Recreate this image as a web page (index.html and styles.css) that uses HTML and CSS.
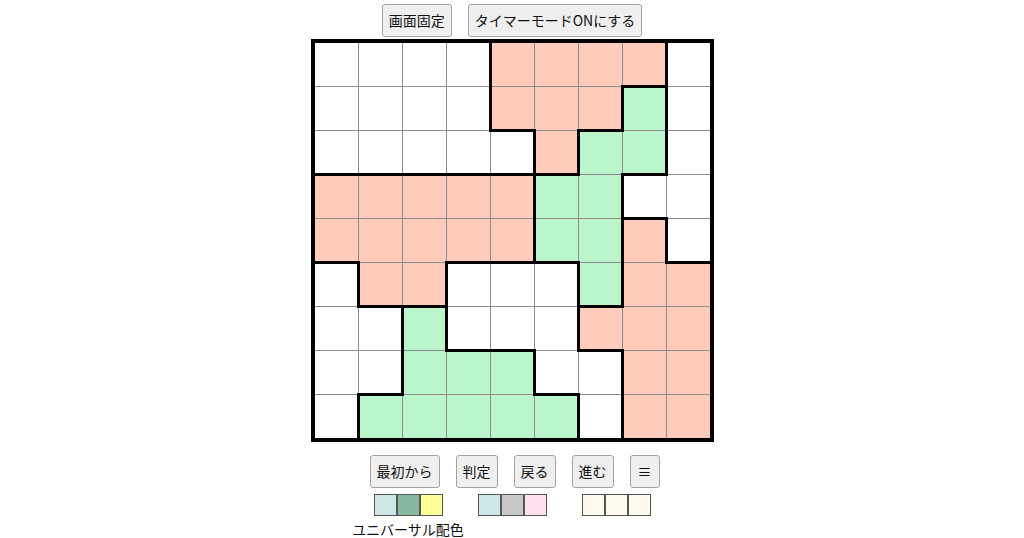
FILE: index.html
```html
<!DOCTYPE html>
<html lang="ja">
<head>
    <meta charset="UTF-8">
    <meta name="viewport" content="width=device-width, initial-scale=1.0">
    <title>パズル</title>
    <link rel="stylesheet" href="styles.css">
</head>
<body>
    <div class="toolbar">
        <button class="btn">画面固定</button>
        <button class="btn">タイマーモードONにする</button>
    </div>

    <div id="board" class="board">
        <!-- cells are built by board.js -->
    </div>

    <div class="controls">
        <button class="btn">最初から</button>
        <button class="btn">判定</button>
        <button class="btn">戻る</button>
        <button class="btn">進む</button>
        <button class="btn menu-btn">≡</button>
    </div>

    <div class="palettes">
        <div class="palette">
            <div class="swatches">
                <span class="swatch" style="background:#cde6e8"></span>
                <span class="swatch" style="background:#88b8a0"></span>
                <span class="swatch" style="background:#ffff99"></span>
            </div>
            <div class="palette-label">ユニバーサル配色</div>
        </div>
        <div class="palette">
            <div class="swatches">
                <span class="swatch" style="background:#cde6e8"></span>
                <span class="swatch" style="background:#c8c8c8"></span>
                <span class="swatch" style="background:#ffe0ef"></span>
            </div>
        </div>
        <div class="palette">
            <div class="swatches">
                <span class="swatch" style="background:#fffaee"></span>
                <span class="swatch" style="background:#fffaee"></span>
                <span class="swatch" style="background:#fffaee"></span>
            </div>
        </div>
    </div>

    <script src="board.js"></script>
</body>
</html>
```

FILE: styles.css
```css
body {
    font-family: 'Noto Sans CJK JP', 'Noto Sans', sans-serif;
    font-size: 14px;
    color: #111;
    margin: 0;
    padding-top: 4px;
    background-color: #fff;
    display: flex;
    flex-direction: column;
    align-items: center;
}

.btn {
    font-family: inherit;
    font-size: 14px;
    line-height: 19px;
    color: #111;
    padding: 6px 6px;
    margin: 0 8px;
    background-color: #efefef;
    border: 1px solid #a3a3a3;
    border-radius: 3px;
    cursor: pointer;
}

.btn:hover {
    background-color: #e5e5e5;
}

.menu-btn {
    padding: 6px 7px;
}

.toolbar {
    display: flex;
    margin-bottom: 2px;
}

.board {
    display: grid;
    grid-template-columns: repeat(9, 43px);
    grid-auto-rows: 43px;
    gap: 1px;
    background-color: #8c8c8c;
    border: 4px solid #000;
}

.cell {
    position: relative;
    background-color: #fff;
}

.cell.red {
    background-color: #ffccbb;
}

.cell.green {
    background-color: #bbf5cc;
}

/* thick region borders */
.cell.edge-r::after {
    content: '';
    position: absolute;
    top: -2px;
    bottom: -2px;
    right: -2px;
    width: 3px;
    background-color: #000;
    z-index: 1;
}

.cell.edge-b::before {
    content: '';
    position: absolute;
    left: -2px;
    right: -2px;
    bottom: -2px;
    height: 3px;
    background-color: #000;
    z-index: 1;
}

.controls {
    display: flex;
    margin-top: 13px;
    margin-left: 5px;
}

.palettes {
    display: flex;
    gap: 35px;
    margin-top: 6px;
}

.palette {
    display: flex;
    flex-direction: column;
    align-items: center;
}

.swatches {
    display: flex;
}

.swatch {
    display: block;
    width: 21px;
    height: 20px;
    border: 1px solid #555;
}

.palette-label {
    white-space: nowrap;
    line-height: 18px;
    margin: 4px -22px 0;
}
```

FILE: board.js
```js
// W = blank, R = red region, G = green region
const layout = [
    'WWWWRRRRW',
    'WWWWRRRGW',
    'WWWWWRGGW',
    'RRRRRGGWW',
    'RRRRRGGRW',
    'WRRWWWGRR',
    'WWGWWWRRR',
    'WWGGGWWRR',
    'WGGGGGWRR'
];

const names = { W: '', R: 'red', G: 'green' };
const board = document.getElementById('board');

layout.forEach((row, r) => {
    for (let c = 0; c < row.length; c++) {
        const cell = document.createElement('div');
        cell.classList.add('cell');
        const ch = row[c];
        if (names[ch]) cell.classList.add(names[ch]);

        // thick line wherever the neighbour belongs to a different region
        if (c < row.length - 1 && row[c + 1] !== ch) cell.classList.add('edge-r');
        if (r < layout.length - 1 && layout[r + 1][c] !== ch) cell.classList.add('edge-b');

        board.appendChild(cell);
    }
});
```
